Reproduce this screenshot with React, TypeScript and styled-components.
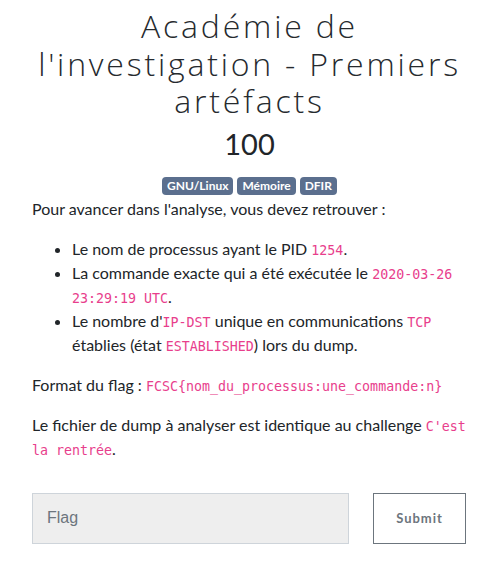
import styled, { createGlobalStyle } from 'styled-components';

const GlobalStyle = createGlobalStyle`
  html, body {
    margin: 0;
    padding: 0;
    background: #ffffff;
  }
  body {
    font-family: Lato, "Noto Sans", sans-serif;
    font-size: 16px;
    line-height: 1.5;
    color: #212529;
  }
`

const Page = styled.div`
  display: flex;
  flex-direction: column;
  padding: 7px 30px 0 32px;
`

const Title = styled.h3`
  margin: 0 -10px;
  text-align: center;
  font-family: "Open Sans", sans-serif;
  font-weight: 300;
  font-size: 32px;
  line-height: 37.5px;
  letter-spacing: 2.8px;
  color: #262a2e;
`

const Value = styled.h4`
  margin: 5px 0 0;
  text-align: center;
  font-family: Lato, sans-serif;
  font-weight: 400;
  font-size: 29px;
  line-height: 38px;
`

const Tags = styled.div`
  display: flex;
  justify-content: center;
  gap: 4px;
  margin-top: 14px;
`

const Badge = styled.span`
  display: inline-block;
  padding: 3px 5px;
  font-size: 12px;
  font-weight: 700;
  line-height: 1;
  color: #ffffff;
  background: #5b6f8e;
  border-radius: 4px;
`

const Text = styled.p<{ $top?: number }>`
  margin: ${(p) => p.$top ?? 0}px 0 16px;
`

const List = styled.ul`
  margin: 0 0 16px;
  padding-left: 40px;
`

const Code = styled.code`
  font-family: "DejaVu Sans Mono", "Liberation Mono", monospace;
  font-size: 13.3px;
  color: #e83e8c;
  word-wrap: break-word;
`

const FlagForm = styled.form`
  display: grid;
  grid-template-columns: 317px 93px;
  column-gap: 24px;
  margin-top: 16px;
`

const FlagInput = styled.input`
  box-sizing: border-box;
  height: 51px;
  padding: 0 14px;
  font-family: "Liberation Sans", Arial, sans-serif;
  font-size: 16px;
  color: #495057;
  background: #eeeeee;
  border: 1px solid #ced4da;
  border-radius: 0;
  outline: none;

  &::placeholder {
    color: #6c757d;
  }
`

const SubmitButton = styled.button`
  box-sizing: border-box;
  height: 51px;
  font-family: Lato, sans-serif;
  font-size: 13px;
  font-weight: 700;
  letter-spacing: 1px;
  color: #6c757d;
  background: #ffffff;
  border: 1px solid #6c757d;
  border-radius: 0;
  cursor: pointer;
`

const tags = ['GNU/Linux', 'Mémoire', 'DFIR']

export default function App() {
  return (
    <>
      <GlobalStyle />
      <Page>
        <Title>Académie de l'investigation - Premiers artéfacts</Title>
        <Value>100</Value>
        <Tags>
          {tags.map((tag) => (
            <Badge key={tag}>{tag}</Badge>
          ))}
        </Tags>
        <Text $top={2}>Pour avancer dans l'analyse, vous devez retrouver :</Text>
        <List>
          <li>Le nom de processus ayant le PID <Code>1254</Code>.</li>
          <li>La commande exacte qui a été exécutée le <Code>2020-03-26</Code> <Code>23:29:19 UTC</Code>.</li>
          <li>Le nombre d'<Code>IP-DST</Code> unique en communications <Code>TCP</Code> établies (état <Code>ESTABLISHED</Code>) lors du dump.</li>
        </List>
        <Text>Format du flag : <Code>FCSC&#123;nom_du_processus:une_commande:n&#125;</Code></Text>
        <Text>Le fichier de dump à analyser est identique au challenge <Code>C'est</Code> <Code>la rentrée</Code>.</Text>
        <FlagForm onSubmit={(e) => e.preventDefault()}>
          <FlagInput placeholder="Flag" />
          <SubmitButton type="submit">Submit</SubmitButton>
        </FlagForm>
      </Page>
    </>
  )
}
